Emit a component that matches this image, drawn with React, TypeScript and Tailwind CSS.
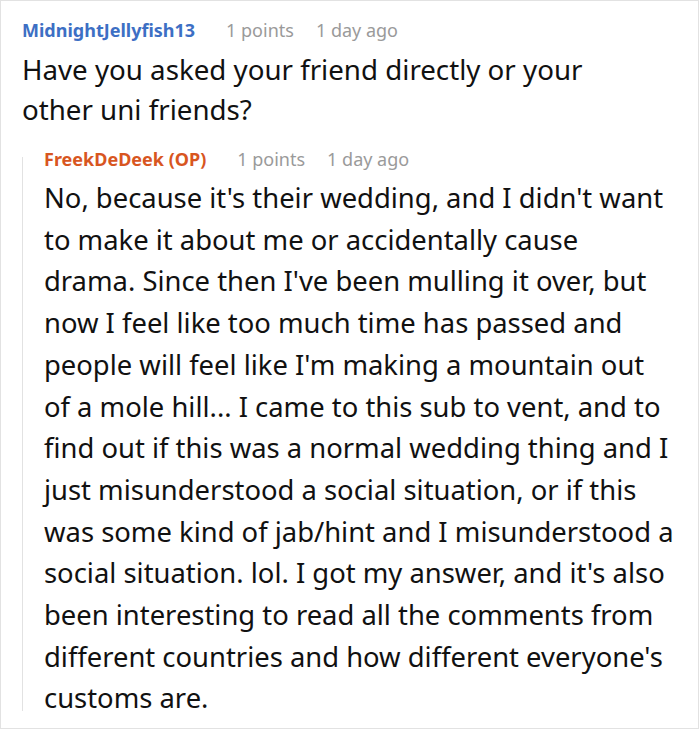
import React from 'react';

const comment = ['Have you asked your friend directly or your', 'other uni friends?'];

const reply = [
  "No, because it's their wedding, and I didn't want",
  'to make it about me or accidentally cause',
  "drama. Since then I've been mulling it over, but",
  'now I feel like too much time has passed and',
  "people will feel like I'm making a mountain out",
  'of a mole hill... I came to this sub to vent, and to',
  'find out if this was a normal wedding thing and I',
  'just misunderstood a social situation, or if this',
  'was some kind of jab/hint and I misunderstood a',
  "social situation. lol. I got my answer, and it's also",
  'been interesting to read all the comments from',
  "different countries and how different everyone's",
  'customs are.',
];

const Meta = ({ name, color }: { name: string; color: string }) => (
  <div className="flex items-baseline text-[18px] leading-[26px] whitespace-nowrap">
    <span className={`font-bold ${color}`}>{name}</span>
    <span className="ml-[31px] text-[#9a9a9a]">1 points</span>
    <span className="ml-[22px] text-[#9a9a9a]">1 day ago</span>
  </div>
);

const App = () => {
  return (
    <div className="w-[699px] h-[729px] border border-[#e2e2e2] bg-white overflow-hidden font-['Noto_Sans',sans-serif]">
      <div className="pl-[21px] pt-[16px]">
        <Meta name="MidnightJellyfish13" color="text-[#3d6fc4]" />
        <p className="mt-[6px] text-[27.7px] leading-[40px] text-[#111]">
          {comment.map(l => (
            <span key={l} className="block whitespace-nowrap">{l}</span>
          ))}
        </p>
        <div className="flex mt-[13px]">
          <div className="w-[1px] bg-[#e2e2e2] mt-[15px] mb-[8px]" />
          <div className="pl-[21px] pt-[4px]">
            <Meta name="FreekDeDeek (OP)" color="text-[#d8561f]" />
            <p className="mt-[5px] text-[27.4px] leading-[41.7px] text-[#111]">
              {reply.map(l => (
                <span key={l} className="block whitespace-nowrap">{l}</span>
              ))}
            </p>
          </div>
        </div>
      </div>
    </div>
  );
};

export default App;
